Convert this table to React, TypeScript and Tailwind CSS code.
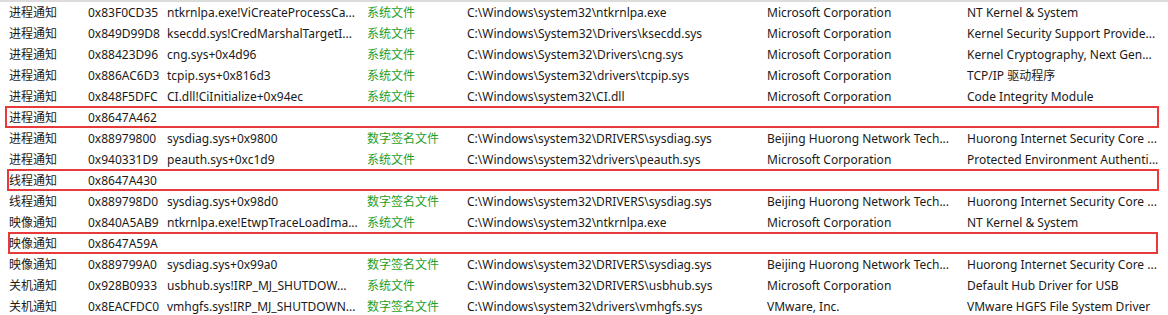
const rows = [
  { type: "进程通知", addr: "0x83F0CD35", mod: "ntkrnlpa.exe!ViCreateProcessCa...", sign: "系统文件", path: "C:\\Windows\\system32\\ntkrnlpa.exe", corp: "Microsoft Corporation", desc: "NT Kernel & System" },
  { type: "进程通知", addr: "0x849D99D8", mod: "ksecdd.sys!CredMarshalTargetI...", sign: "系统文件", path: "C:\\Windows\\System32\\Drivers\\ksecdd.sys", corp: "Microsoft Corporation", desc: "Kernel Security Support Provide..." },
  { type: "进程通知", addr: "0x88423D96", mod: "cng.sys+0x4d96", sign: "系统文件", path: "C:\\Windows\\System32\\Drivers\\cng.sys", corp: "Microsoft Corporation", desc: "Kernel Cryptography, Next Gen..." },
  { type: "进程通知", addr: "0x886AC6D3", mod: "tcpip.sys+0x816d3", sign: "系统文件", path: "C:\\Windows\\System32\\drivers\\tcpip.sys", corp: "Microsoft Corporation", desc: "TCP/IP 驱动程序" },
  { type: "进程通知", addr: "0x848F5DFC", mod: "CI.dll!CiInitialize+0x94ec", sign: "系统文件", path: "C:\\Windows\\system32\\CI.dll", corp: "Microsoft Corporation", desc: "Code Integrity Module" },
  { type: "进程通知", addr: "0x8647A462", mod: "", sign: "", path: "", corp: "", desc: "", mark: "left-[5px] right-[9px]" },
  { type: "进程通知", addr: "0x88979800", mod: "sysdiag.sys+0x9800", sign: "数字签名文件", path: "C:\\Windows\\system32\\DRIVERS\\sysdiag.sys", corp: "Beijing Huorong Network Tech...", desc: "Huorong Internet Security Core ..." },
  { type: "进程通知", addr: "0x940331D9", mod: "peauth.sys+0xc1d9", sign: "系统文件", path: "C:\\Windows\\system32\\drivers\\peauth.sys", corp: "Microsoft Corporation", desc: "Protected Environment Authenti..." },
  { type: "线程通知", addr: "0x8647A430", mod: "", sign: "", path: "", corp: "", desc: "", mark: "left-[7px] right-[9px]" },
  { type: "线程通知", addr: "0x889798D0", mod: "sysdiag.sys+0x98d0", sign: "数字签名文件", path: "C:\\Windows\\system32\\DRIVERS\\sysdiag.sys", corp: "Beijing Huorong Network Tech...", desc: "Huorong Internet Security Core ..." },
  { type: "映像通知", addr: "0x840A5AB9", mod: "ntkrnlpa.exe!EtwpTraceLoadIma...", sign: "系统文件", path: "C:\\Windows\\system32\\ntkrnlpa.exe", corp: "Microsoft Corporation", desc: "NT Kernel & System" },
  { type: "映像通知", addr: "0x8647A59A", mod: "", sign: "", path: "", corp: "", desc: "", mark: "left-[8px] right-[10px]" },
  { type: "映像通知", addr: "0x889799A0", mod: "sysdiag.sys+0x99a0", sign: "数字签名文件", path: "C:\\Windows\\system32\\DRIVERS\\sysdiag.sys", corp: "Beijing Huorong Network Tech...", desc: "Huorong Internet Security Core ..." },
  { type: "关机通知", addr: "0x928B0933", mod: "usbhub.sys!IRP_MJ_SHUTDOW...", sign: "系统文件", path: "C:\\Windows\\system32\\DRIVERS\\usbhub.sys", corp: "Microsoft Corporation", desc: "Default Hub Driver for USB" },
  { type: "关机通知", addr: "0x8EACFDC0", mod: "vmhgfs.sys!IRP_MJ_SHUTDOWN...", sign: "数字签名文件", path: "C:\\Windows\\system32\\drivers\\vmhgfs.sys", corp: "VMware, Inc.", desc: "VMware HGFS File System Driver" },
];

const App = () => {
  return (
    <div className="w-[1168px] h-[315px] bg-white overflow-hidden text-[12px] text-[#1a1a1a] font-['Noto_Sans','Noto_Sans_CJK_SC',sans-serif]">
      <div className="h-[2px] bg-[#dcdcdc]" />
      {rows.map((r, i) => (
        <div key={i} className="relative flex items-center h-[21px] whitespace-nowrap">
          <div className="w-[88px] pl-[9px] overflow-hidden">{r.type}</div>
          <div className="w-[79px] overflow-hidden">{r.addr}</div>
          <div className="w-[200px] overflow-hidden">{r.mod}</div>
          <div className="w-[100px] overflow-hidden text-[#1f9e1f]">{r.sign}</div>
          <div className="w-[300px] overflow-hidden">{r.path}</div>
          <div className="w-[200px] overflow-hidden">{r.corp}</div>
          <div className="w-[200px] overflow-hidden">{r.desc}</div>
          {r.mark && (
            <div className={`absolute top-[-1px] bottom-[0px] border-2 border-[#e8393b] ${r.mark}`} />
          )}
        </div>
      ))}
    </div>
  );
};

export default App;
